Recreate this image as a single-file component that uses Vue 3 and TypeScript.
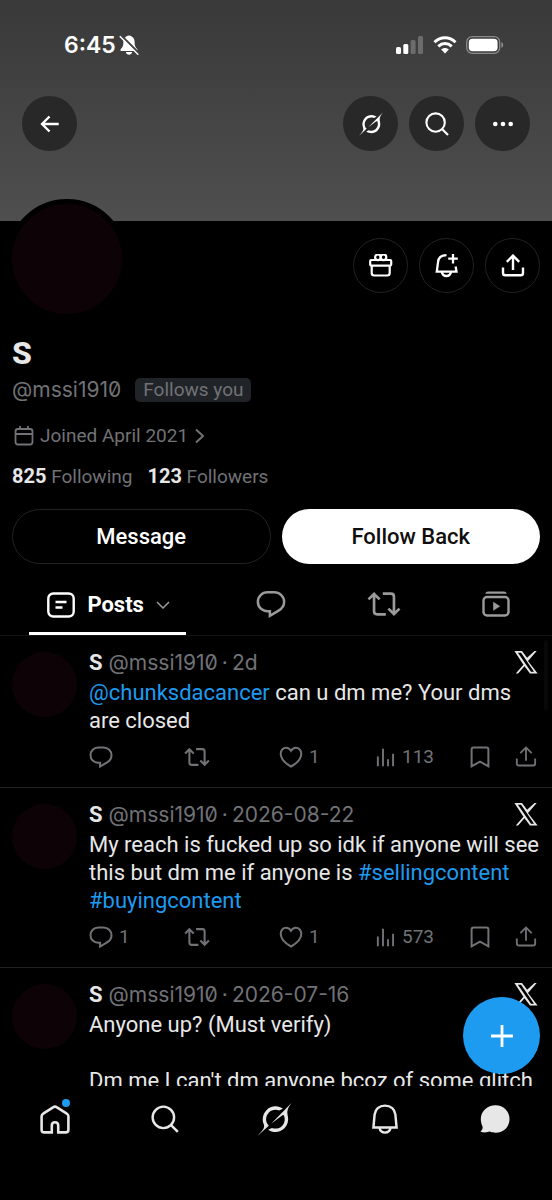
<script setup lang="ts">
interface Part {
  text: string
  link?: boolean
}

interface Post {
  id: number
  date: string
  body: Part[]
  replies?: number
  likes?: number
  views?: number
}

const posts: Post[] = [
  {
    id: 1,
    date: '2d',
    body: [{ text: '@chunksdacancer', link: true }, { text: ' can u dm me? Your dms are closed' }],
    likes: 1,
    views: 113,
  },
  {
    id: 2,
    date: '2026-08-22',
    body: [
      { text: 'My reach is fucked up so idk if anyone will see this but dm me if anyone is ' },
      { text: '#sellingcontent', link: true },
      { text: ' ' },
      { text: '#buyingcontent', link: true },
    ],
    replies: 1,
    likes: 1,
    views: 573,
  },
  {
    id: 3,
    date: '2026-07-16',
    body: [{ text: "Anyone up? (Must verify)\n\nDm me I can't dm anyone bcoz of some glitch" }],
  },
]

const navItems = [
  { icon: 'home', label: 'Home', size: 'i30', dot: true },
  { icon: 'search', label: 'Search', size: 'i28' },
  { icon: 'grok', label: 'Grok', size: 'i34' },
  { icon: 'bell', label: 'Notifications', size: 'i30' },
  { icon: 'chat', label: 'Messages', size: 'i30' },
]
</script>

<template>
  <div class="screen">
    <svg class="sprite" aria-hidden="true">
      <symbol id="back" viewBox="0 0 24 24">
        <path d="M21.5 12H3.5M11.5 3.8 3.3 12l8.2 8.2" fill="none" stroke="currentColor" stroke-width="2.6" />
      </symbol>
      <symbol id="grok" viewBox="0 0 33 32">
        <path fill="currentColor" d="M12.745 20.54l10.97-8.19c.539-.4 1.307-.244 1.564.38 1.349 3.288.746 7.241-1.938 9.955-2.683 2.714-6.417 3.31-9.83 1.954l-3.728 1.745c5.347 3.697 11.84 2.782 15.898-1.324 3.219-3.255 4.216-7.692 3.284-11.693l.008.009c-1.351-5.878.332-8.227 3.782-13.031L33 0l-4.54 4.59v-.014L12.743 20.544m-2.263 1.987c-3.837-3.707-3.175-9.446.1-12.755 2.42-2.449 6.388-3.448 9.852-1.979l3.72-1.737c-.67-.49-1.53-1.017-2.515-1.387-4.455-1.854-9.789-.931-13.41 2.728-3.483 3.523-4.579 8.94-2.697 13.561 1.405 3.454-.899 5.898-3.22 8.364C1.49 30.2.666 31.074 0 32l10.478-9.466" />
      </symbol>
      <symbol id="search" viewBox="0 0 24 24">
        <g fill="none" stroke="currentColor" stroke-width="2.1">
          <circle cx="10.6" cy="10.6" r="9.2" />
          <path d="m17 17 6 6" />
        </g>
      </symbol>
      <symbol id="more" viewBox="0 0 24 24">
        <g fill="currentColor">
          <circle cx="3.6" cy="12" r="2.5" /><circle cx="12" cy="12" r="2.5" /><circle cx="20.4" cy="12" r="2.5" />
        </g>
      </symbol>
      <symbol id="gift" viewBox="0 1.5 24 24">
        <g fill="none" stroke="currentColor" stroke-width="2.2">
          <rect x="1.2" y="7.5" width="21" height="5.6" rx="1" />
          <path d="M2.7 13.100v7.400q0 2.500 2.500 2.500h13q2.500 0 2.500-2.500v-7.400" />
          <circle cx="8.900" cy="4.800" r="2.800" /><circle cx="14.500" cy="4.800" r="2.800" />
        </g>
      </symbol>
      <symbol id="bell-plus" viewBox="1 1.500 24 24">
        <g fill="none" stroke="currentColor" stroke-width="2.300">
          <path d="M12.500 2.700C7 2.700 4.300 5.800 4 9.800L2.800 19.200H22.500L21.600 14" />
          <path d="M7.800 19.500c.5 2.600 2.300 4 4.600 4s4.100-1.400 4.600-4M19 1.500v9.500M14.200 6.200h9.600" />
        </g>
      </symbol>
      <symbol id="share" viewBox="0 1 24 24">
        <path d="M12 17V3M5.800 8.800 12 2.600l6.200 6.200M2 14.500V20q0 2.300 2.300 2.300h15.400q2.300 0 2.300-2.300v-5.500" fill="none" stroke="currentColor" />
      </symbol>
      <symbol id="calendar" viewBox="0 0 20 20">
        <path d="M4 3h12q2.500 0 2.500 2.500v10.500q0 2.500-2.500 2.500H4q-2.500 0-2.500-2.500V5.500Q1.500 3 4 3zM1.500 8h17M6 0v4M14 0v4" fill="none" stroke="currentColor" stroke-width="1.800" />
      </symbol>
      <symbol id="chevron-right" viewBox="0 0 12 16">
        <path d="m2 1.500 7 6.500-7 6.500" fill="none" stroke="currentColor" stroke-width="2" />
      </symbol>
      <symbol id="chevron-down" viewBox="0 0 14 8">
        <path d="m1 1 6 6 6-6" fill="none" stroke="currentColor" stroke-width="1.500" />
      </symbol>
      <symbol id="posts" viewBox="0 0 28 26">
        <g fill="none" stroke="currentColor" stroke-width="2.400">
          <rect x="1.300" y="1.500" width="25.400" height="23" rx="5" />
          <path d="M8.500 10h11M8.500 15.500h7" />
        </g>
      </symbol>
      <symbol id="reply" viewBox="0 0 24 24">
        <path d="M9.200 2.600h5.400c4.400 0 7.900 3.400 7.900 7.600 0 3.200-1.700 5.500-4.400 7.100l-7 4.200v-3.800H9.200c-4.500 0-7.700-3.300-7.700-7.500s3.300-7.600 7.700-7.600z" fill="none" stroke="currentColor" stroke-width="2" />
      </symbol>
      <symbol id="repost" viewBox="0 0 28 24">
        <path d="M1.200 8.200 5.800 3.700l4.600 4.500M5.800 4v14q0 2.500 2.500 2.500H15.500M13 3.500h6.700q2.500 0 2.500 2.500v14M17.600 15.800l4.600 4.500 4.600-4.500" fill="none" stroke="currentColor" stroke-width="2.200" />
      </symbol>
      <symbol id="video" viewBox="0 0 28 26">
        <rect x="1.500" y="6" width="25" height="18.500" rx="3.500" fill="none" stroke="currentColor" stroke-width="2.400" />
        <path d="M3.500 2.800Q3.500.5 6.200.5h15.600q2.700 0 2.700 2.300zM11.200 10.800v9l7-4.500z" fill="currentColor" />
      </symbol>
      <symbol id="heart" viewBox="0 0 24 24">
        <path d="M12 21.500C6 18.200 1.700 13.800 1.700 8.800c0-3.400 2.400-6 5.500-6 2.100 0 3.700 1.100 4.800 3 1.100-1.900 2.700-3 4.800-3 3.100 0 5.500 2.600 5.500 6 0 5-4.300 9.400-10.300 12.700z" fill="none" stroke="currentColor" stroke-width="2" />
      </symbol>
      <symbol id="views" viewBox="0 0 24 24">
        <path d="M4.200 22V11.500M9.800 22V3M15.300 22v-7.500M20.800 22V8.500" fill="none" stroke="currentColor" stroke-width="2.100" />
      </symbol>
      <symbol id="bookmark" viewBox="0 0 24 24">
        <path d="M3.600 21.300V4.500q0-2 2-2h12.800q2 0 2 2v16.800L12 16.600z" fill="none" stroke="currentColor" stroke-width="2" />
      </symbol>
      <symbol id="x-logo" viewBox="0 0 24 24">
        <path fill="currentColor" d="M20.500 1h2.200l-8.700 9.900L23.600 23.500H16l-5.500-7.200L4.100 23.500H1.700l7.700-8.700L.4 1H8l5.100 6.800zM17 21.700h3L7.100 2.800H3.900z" />
      </symbol>
      <symbol id="plus" viewBox="0 0 24 24">
        <path d="M12 1v22M1 12h22" fill="none" stroke="currentColor" stroke-width="2.800" />
      </symbol>
      <symbol id="home" viewBox="0 0 28 28">
        <path d="M11 26.500H4q-2.500 0-2.500-2.500V11.500q0-1.700 1.500-2.600l9.500-6q1.500-1 3 0l9.500 6q1.500.9 1.500 2.600V24q0 2.500-2.500 2.500h-7v-6.500q0-3-3-3t-3 3z" fill="none" stroke="currentColor" stroke-width="2.400" />
      </symbol>
      <symbol id="bell" viewBox="0 0 28 28">
        <g fill="none" stroke="currentColor" stroke-width="2.300">
          <path d="M14 1.500C8.500 1.500 4.800 5 4.300 9.800L3.200 22h21.600L23.700 9.800C23.200 5 19.500 1.500 14 1.500z" />
          <path d="M8.800 22.200c.6 2.800 2.600 4.500 5.200 4.500s4.600-1.700 5.200-4.500" />
        </g>
      </symbol>
      <symbol id="chat" viewBox="0 0 30 28">
        <path d="M15.500.2C23.500.2 29.500 6 29.500 14s-6 13.800-14 13.800c-2.200 0-4-.4-5.700-1.200C7.500 27.500 3.500 28 .3 26.600c1.800-1.200 2.500-2.700 2.300-4.800C1.500 19.500.8 16.800.8 14 .8 6 7.500.2 15.500.2z" fill="currentColor" />
      </symbol>
    </svg>

    <header class="banner">
      <div class="status">
        <div class="clock">
          <span>6:45</span>
          <svg class="muted" viewBox="0 0 20 20" aria-label="Silent">
            <path d="M10 .5c3.600.6 5.600 3 5.600 6.500 0 3.800.8 5.400 2.600 7 .8.8.5 2-.7 2h-15C1.300 16 1 14.800 1.800 14c1.800-1.600 2.600-3.200 2.600-7C4.400 3.500 6.400 1.100 10 .5zM6.800 17h6.400c-.4 1.800-1.600 2.700-3.200 2.700S7.200 18.800 6.800 17z" fill="currentColor" />
            <path d="M1.800 0 20.500 18.700" stroke="#404040" stroke-width="2" />
            <path d="M.8 1.200 19.300 19.700" stroke="currentColor" stroke-width="1.500" />
          </svg>
        </div>
        <div class="signals">
          <svg class="cell" viewBox="0 0 28 18" aria-label="Signal">
            <rect x="0" y="11" width="5" height="7" rx="1.500" fill="#fff" />
            <rect x="7.300" y="8" width="5" height="10" rx="1.500" fill="#fff" />
            <rect x="14.600" y="4" width="5" height="14" rx="1.500" fill="#6c6c6c" />
            <rect x="22" y="0" width="5" height="18" rx="1.500" fill="#6c6c6c" />
          </svg>
          <svg class="wifi" viewBox="0 0 24 18" aria-label="Wi-Fi">
            <g fill="none" stroke="#fff" stroke-width="3">
              <path d="M1.500 6.300c6-6 15-6 21 0" />
              <path d="M5.300 10.300c4-3.800 9.400-3.800 13.400 0" />
            </g>
            <path d="M8.200 13.600c2.300-2 5.300-2 7.600 0L12 17.600z" fill="#fff" />
          </svg>
          <svg class="battery" viewBox="0 0 38 18" aria-label="Battery">
            <rect x=".7" y=".7" width="33" height="16.600" rx="5.500" fill="none" stroke="#8a8a8a" stroke-width="1.300" />
            <rect x="2.800" y="2.800" width="28.800" height="12.400" rx="3.700" fill="#fff" />
            <path d="M35.300 6v6q2-.8 2-3t-2-3z" fill="#8a8a8a" />
          </svg>
        </div>
      </div>
      <div class="toolbar">
        <button class="round shade" aria-label="Back"><svg class="i22"><use href="#back" /></svg></button>
        <div class="group">
          <button class="round shade" aria-label="Grok"><svg class="i24"><use href="#grok" /></svg></button>
          <button class="round shade" aria-label="Search"><svg class="i24"><use href="#search" /></svg></button>
          <button class="round shade" aria-label="More"><svg class="i22"><use href="#more" /></svg></button>
        </div>
      </div>
    </header>

    <section class="profile">
      <div class="top">
        <div class="avatar big"></div>
        <div class="group">
          <button class="round ring" aria-label="Gift"><svg class="i24"><use href="#gift" /></svg></button>
          <button class="round ring" aria-label="Notify"><svg class="i24"><use href="#bell-plus" /></svg></button>
          <button class="round ring" aria-label="Share"><svg class="i24"><use href="#share" /></svg></button>
        </div>
      </div>
      <h1>S</h1>
      <div class="identity">
        <span class="handle">@mssi1910</span>
        <span class="badge">Follows you</span>
      </div>
      <a class="joined" href="#joined">
        <svg class="i20"><use href="#calendar" /></svg>
        <span>Joined April 2021</span>
        <svg class="next"><use href="#chevron-right" /></svg>
      </a>
      <div class="stats">
        <a href="#following"><b>825</b> Following</a>
        <a href="#followers"><b>123</b> Followers</a>
      </div>
      <div class="cta">
        <button class="pill outline">Message</button>
        <button class="pill solid">Follow Back</button>
      </div>
    </section>

    <nav class="tabs" aria-label="Profile sections">
      <button class="tab active">
        <span class="label">
          <svg class="i28"><use href="#posts" /></svg>
          <span>Posts</span>
          <svg class="down"><use href="#chevron-down" /></svg>
        </span>
      </button>
      <button class="tab" aria-label="Replies"><svg class="i30"><use href="#reply" /></svg></button>
      <button class="tab" aria-label="Reposts"><svg class="i34"><use href="#repost" /></svg></button>
      <button class="tab" aria-label="Videos"><svg class="i28"><use href="#video" /></svg></button>
    </nav>

    <main class="feed">
      <article v-for="post in posts" :key="post.id" class="post">
        <div class="avatar"></div>
        <div class="content">
          <div class="meta">
            <b>S</b>
            <span class="handle">@mssi1910</span>
            <span class="muted-text">·</span>
            <span class="muted-text date">{{ post.date }}</span>
            <svg class="x"><use href="#x-logo" /></svg>
          </div>
          <p><template v-for="(part, i) in post.body" :key="i"><a v-if="part.link" href="#tag">{{ part.text }}</a><template v-else>{{ part.text }}</template></template></p>
          <div class="actions">
            <button aria-label="Reply"><svg class="i24"><use href="#reply" /></svg><span>{{ post.replies }}</span></button>
            <button aria-label="Repost"><svg class="i26"><use href="#repost" /></svg></button>
            <button aria-label="Like"><svg class="i24"><use href="#heart" /></svg><span>{{ post.likes }}</span></button>
            <button aria-label="Views"><svg class="i22"><use href="#views" /></svg><span>{{ post.views }}</span></button>
            <button aria-label="Bookmark"><svg class="i24"><use href="#bookmark" /></svg></button>
            <button aria-label="Share"><svg class="i22"><use href="#share" /></svg></button>
          </div>
        </div>
      </article>
      <div class="scrollbar"></div>
      <button class="compose" aria-label="New post"><svg class="i24"><use href="#plus" /></svg></button>
    </main>

    <nav class="bottom" aria-label="Main">
      <a v-for="item in navItems" :key="item.icon" :href="'#' + item.icon" :aria-label="item.label">
        <svg :class="item.size"><use :href="'#' + item.icon" /></svg>
        <i v-if="item.dot" class="dot"></i>
      </a>
    </nav>
  </div>
</template>

<style>
body {
  margin: 0;
  background: #000;
}
</style>

<style scoped>
.screen {
  display: flex;
  flex-direction: column;
  height: 100vh;
  overflow: hidden;
  background: #000;
  color: #e7e7e7;
  font-family: Roboto, "Liberation Sans", sans-serif;
  font-size: 22px;
  line-height: 28px;
}
.sprite {
  position: absolute;
  width: 0;
  height: 0;
}
svg {
  flex: none;
  display: block;
  stroke-width: 2px;
}
button {
  display: flex;
  align-items: center;
  justify-content: center;
  margin: 0;
  padding: 0;
  border: 0;
  background: none;
  color: inherit;
  font: inherit;
}
a {
  color: inherit;
  text-decoration: none;
}
.i20 { width: 20px; height: 20px; }
.i22 { width: 22px; height: 22px; }
.i24 { width: 24px; height: 24px; }
.i26 { width: 26px; height: 26px; }
.i28 { width: 28px; height: 28px; }
.i30 { width: 30px; height: 30px; }
.i34 { width: 34px; height: 34px; }

.banner {
  flex: none;
  padding: 32px 22px 70px;
  background: linear-gradient(#393939, #4f4f4f);
  color: #fff;
}
.status {
  display: flex;
  align-items: center;
  justify-content: space-between;
  height: 26px;
  padding: 0 26px 0 42px;
}
.clock {
  display: flex;
  align-items: center;
  gap: 3px;
  font: 600 23px/26px Inter, sans-serif;
}
.muted { width: 20px; height: 20px; }
.signals {
  display: flex;
  align-items: center;
  gap: 9px;
}
.cell { width: 28px; height: 18px; }
.wifi { width: 24px; height: 18px; }
.battery { width: 38px; height: 18px; }
.toolbar {
  display: flex;
  justify-content: space-between;
  margin-top: 38px;
}
.group {
  display: flex;
  gap: 11px;
}
.round {
  box-sizing: border-box;
  width: 55px;
  height: 55px;
  border-radius: 50%;
  color: #fff;
}
.shade { background: #282828; }
.ring { border: 1px solid #222; }
.ring svg { stroke-width: 2.4px; }

.profile {
  flex: none;
  padding: 0 12px;
  color: #717276;
}
.top {
  display: flex;
  align-items: flex-start;
  justify-content: space-between;
}
.top .group { padding-top: 17px; }
.avatar {
  flex: none;
  width: 65px;
  height: 65px;
  border-radius: 50%;
  background: #0d0205;
}
.avatar.big {
  width: 110px;
  height: 110px;
  margin: -22px 0 0 -5px;
  border: 5px solid #000;
}
h1 {
  margin: 14px 0 0;
  color: #e7e7e7;
  font-size: 32px;
  font-weight: 800;
  line-height: 40px;
}
.identity {
  display: flex;
  align-items: center;
  gap: 14px;
  margin-top: 3px;
}
.handle,
.muted-text {
  color: #717276;
  font-family: Inter, "Liberation Sans", sans-serif;
  font-size: 21px;
}
.handle { font-feature-settings: "zero"; }
.badge {
  padding: 0 8px;
  border-radius: 5px;
  background: #202327;
  font-size: 19px;
  line-height: 24px;
}
.joined {
  display: flex;
  align-items: center;
  gap: 6px;
  margin-top: 18px;
  padding-left: 2px;
  font-size: 19px;
}
.next {
  width: 12px;
  height: 16px;
}
.stats {
  display: flex;
  gap: 15px;
  margin-top: 12px;
  font-size: 19px;
}
.stats b {
  color: #e7e7e7;
  font-size: 20px;
}
.cta {
  display: grid;
  grid-template-columns: 1fr 1fr;
  gap: 11px;
  margin-top: 18px;
}
.pill {
  box-sizing: border-box;
  height: 55px;
  border-radius: 28px;
  font-size: 22px;
  font-weight: 500;
}
.outline {
  border: 1px solid #222;
  color: #fff;
}
.solid {
  background: #fff;
  color: #0f0f0f;
}

.tabs {
  flex: none;
  display: flex;
  height: 71px;
  border-bottom: 1px solid #141414;
}
.tab {
  flex: 1;
  padding-top: 9px;
  color: #9a9a9a;
}
.tab.active {
  flex: 0 0 39%;
  align-items: stretch;
  color: #fff;
  font-weight: 700;
}
.label {
  display: flex;
  align-items: center;
  gap: 12px;
  padding: 4px 16px 0 18px;
  border-bottom: 3px solid #fff;
}
.down {
  width: 14px;
  height: 8px;
  color: #9a9a9a;
}

.feed {
  position: relative;
  flex: 1;
  min-height: 0;
  overflow: hidden;
}
.post {
  display: flex;
  gap: 12px;
  padding: 13px 12px 20px;
  border-bottom: 1px solid #222;
}
.post .avatar { margin-top: 3px; }
.content {
  flex: 1;
  min-width: 0;
}
.meta {
  display: flex;
  gap: 4px;
}
.meta b { margin-right: 2px; }
.date { flex: 1; }
.x {
  width: 24px;
  height: 24px;
  margin: 1px 2px 0 0;
}
p {
  margin: 2px 0 0;
  white-space: pre-wrap;
}
p a { color: #1d9bf0; }
.actions {
  display: grid;
  grid-template-columns: 95fr 95fr 95fr 94fr 47fr 25fr;
  height: 24px;
  margin-top: 8px;
  color: #717276;
  font-size: 19px;
}
.actions button {
  justify-content: flex-start;
  gap: 6px;
  min-width: 0;
}
.scrollbar {
  position: absolute;
  top: 4px;
  right: 4px;
  width: 4px;
  height: 70px;
  border-radius: 2px;
  background: #080808;
}
.compose {
  position: absolute;
  right: 12px;
  bottom: 12px;
  width: 77px;
  height: 77px;
  border-radius: 50%;
  background: #1d9bf0;
  color: #fff;
}

.bottom {
  flex: none;
  display: flex;
  height: 114px;
  padding-right: 2px;
}
.bottom a {
  position: relative;
  flex: 1;
  display: flex;
  align-items: center;
  justify-content: center;
  height: 66px;
}
.dot {
  position: absolute;
  top: 13px;
  left: 50%;
  width: 8px;
  height: 8px;
  margin-left: 7px;
  border-radius: 50%;
  background: #1d9bf0;
}
</style>
